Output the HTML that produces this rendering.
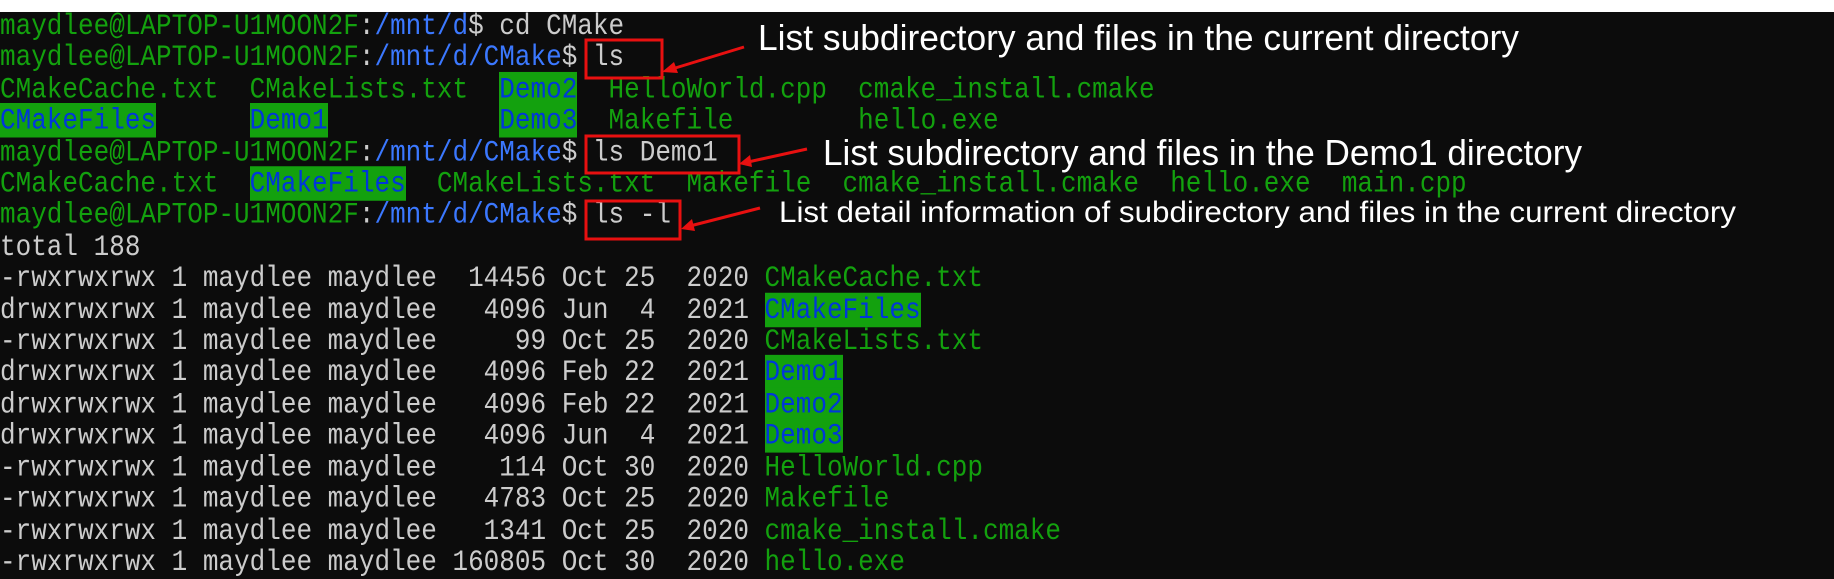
<!DOCTYPE html>
<html><head><meta charset="utf-8"><style>
html,body{margin:0;padding:0}
body{width:1834px;height:577px;position:relative;overflow:hidden;background:#0c0c0c}
.top{position:absolute;left:0;top:0;width:1834px;height:12px;background:#fff}
pre{position:absolute;left:0;top:11px;margin:0;font-family:"Liberation Mono",monospace;font-size:26px;line-height:27.4px;color:#cccccc;letter-spacing:0;transform:scaleY(1.15);transform-origin:0 0}
.g{color:#13a10e}.b{color:#3b78ff}.w{color:#cccccc}
.d{background:#13a10e;color:#0037da}
svg{position:absolute;left:0;top:0}
</style></head><body>
<div class="top"></div>
<pre><span class="g">maydlee@LAPTOP-U1MOON2F</span>:<span class="b">/mnt/d</span>$ cd CMake
<span class="g">maydlee@LAPTOP-U1MOON2F</span>:<span class="b">/mnt/d/CMake</span>$ ls
<span class="g">CMakeCache.txt  CMakeLists.txt  </span><span class="d">Demo2</span><span class="g">  HelloWorld.cpp  cmake_install.cmake</span>
<span class="d">CMakeFiles</span>      <span class="d">Demo1</span>           <span class="d">Demo3</span><span class="g">  Makefile        hello.exe</span>
<span class="g">maydlee@LAPTOP-U1MOON2F</span>:<span class="b">/mnt/d/CMake</span>$ ls Demo1
<span class="g">CMakeCache.txt  </span><span class="d">CMakeFiles</span><span class="g">  CMakeLists.txt  Makefile  cmake_install.cmake  hello.exe  main.cpp</span>
<span class="g">maydlee@LAPTOP-U1MOON2F</span>:<span class="b">/mnt/d/CMake</span>$ ls -l
total 188
-rwxrwxrwx 1 maydlee maydlee  14456 Oct 25  2020 <span class="g">CMakeCache.txt</span>
drwxrwxrwx 1 maydlee maydlee   4096 Jun  4  2021 <span class="d">CMakeFiles</span>
-rwxrwxrwx 1 maydlee maydlee     99 Oct 25  2020 <span class="g">CMakeLists.txt</span>
drwxrwxrwx 1 maydlee maydlee   4096 Feb 22  2021 <span class="d">Demo1</span>
drwxrwxrwx 1 maydlee maydlee   4096 Feb 22  2021 <span class="d">Demo2</span>
drwxrwxrwx 1 maydlee maydlee   4096 Jun  4  2021 <span class="d">Demo3</span>
-rwxrwxrwx 1 maydlee maydlee    114 Oct 30  2020 <span class="g">HelloWorld.cpp</span>
-rwxrwxrwx 1 maydlee maydlee   4783 Oct 25  2020 <span class="g">Makefile</span>
-rwxrwxrwx 1 maydlee maydlee   1341 Oct 25  2020 <span class="g">cmake_install.cmake</span>
-rwxrwxrwx 1 maydlee maydlee 160805 Oct 30  2020 <span class="g">hello.exe</span></pre>
<svg width="1834" height="577" viewBox="0 0 1834 577">
<g fill="none" stroke="#e81010" stroke-width="3">
<rect x="586" y="40" width="76" height="38"/>
<rect x="586" y="136" width="153" height="37"/>
<rect x="586" y="201" width="94" height="38"/>
<line x1="744" y1="47" x2="672" y2="69"/>
<line x1="807" y1="149" x2="748" y2="162"/>
<line x1="760" y1="208" x2="690" y2="226"/>
</g>
<g fill="#e81010">
<polygon points="662,72 674,62 678,73"/>
<polygon points="739,164 750,155 752,167"/>
<polygon points="681,229 692,219 695,231"/>
</g>
<g fill="#ffffff" font-family="Liberation Sans, sans-serif">
<text x="758" y="50" font-size="36" textLength="761" lengthAdjust="spacingAndGlyphs">List subdirectory and files in  the current directory</text>
<text x="823" y="165" font-size="36" textLength="759" lengthAdjust="spacingAndGlyphs">List subdirectory and files in  the Demo1 directory</text>
<text x="779" y="222" font-size="30" textLength="957" lengthAdjust="spacingAndGlyphs">List detail information of subdirectory and files in the current  directory</text>
</g>
</svg>
</body></html>
